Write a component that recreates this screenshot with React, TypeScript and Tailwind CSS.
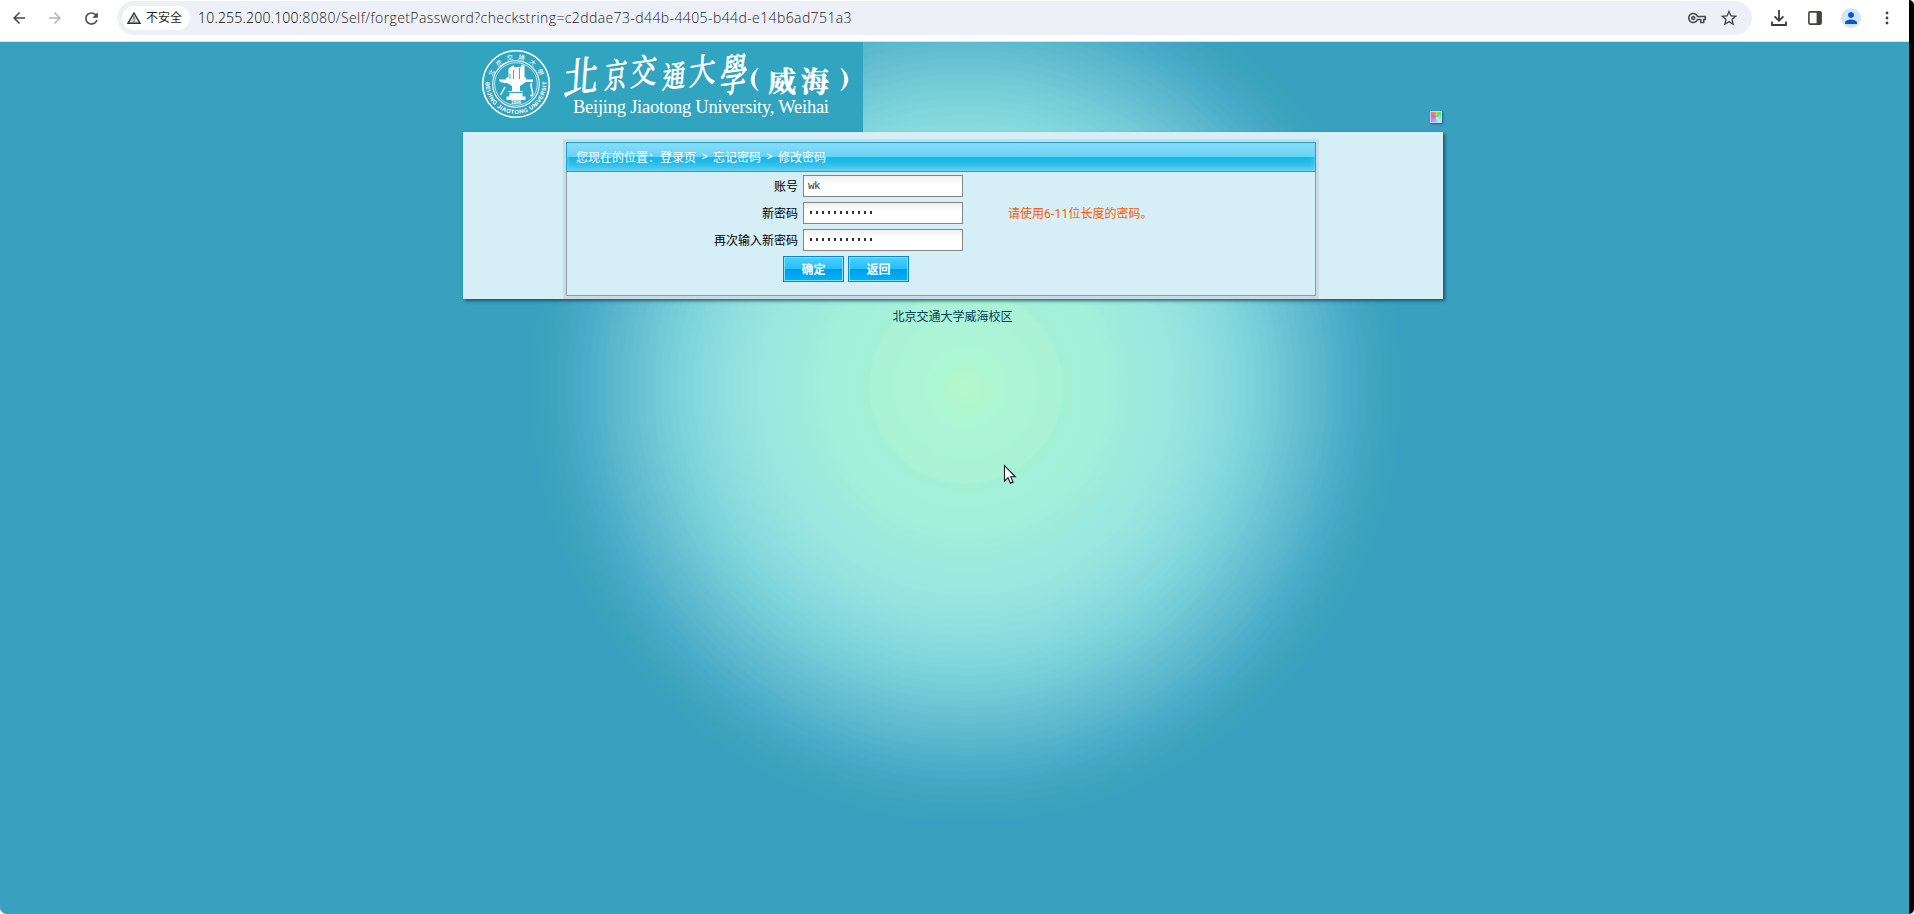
import React from "react";
import {
  MdArrowBack,
  MdArrowForward,
  MdRefresh,
  MdOutlineVpnKey,
  MdStarBorder,
  MdPerson,
} from "react-icons/md";

// Radius and colour of the backdrop glow, from the centre outwards.
const glowStops: [number, number, number, number][] = [
  [0, 184, 246, 204],
  [14, 176, 246, 206],
  [30, 171, 246, 208],
  [44, 171, 245, 214],
  [92, 170, 243, 214],
  [98, 164, 240, 215],
  [138, 163, 239, 217],
  [165, 158, 235, 221],
  [200, 154, 232, 222],
  [245, 142, 222, 223],
  [275, 130, 214, 219],
  [305, 114, 203, 214],
  [335, 99, 190, 208],
  [365, 84, 178, 203],
  [392, 70, 169, 197],
  [405, 66, 166, 192],
  [422, 58, 163, 188],
  [436, 58, 160, 191],
];

function glowAt(radius: number) {
  const next = Math.max(1, glowStops.findIndex((s) => s[0] >= radius));
  const a = glowStops[next - 1];
  const b = glowStops[next];
  const t = Math.min(1, Math.max(0, (radius - a[0]) / (b[0] - a[0])));
  const mix = (i: 1 | 2 | 3) => Math.round(a[i] + (b[i] - a[i]) * t);
  return `rgb(${mix(1)},${mix(2)},${mix(3)})`;
}

function glowGradient() {
  const parts: string[] = [];
  for (let r = 0; r < 432; r += 8) {
    const colour = glowAt(r + 4);
    parts.push(`${colour} ${r === 0 ? 0 : r + 2}px`, `${colour} ${r + 7}px`);
  }
  parts.push("#3aa0bf 436px");
  return `radial-gradient(circle 436px at 966px 345px, ${parts.join(",")})`;
}

function ToolButton({ children }: { children: React.ReactNode }) {
  return <button className="flex h-9 w-9 shrink-0 items-center justify-center text-[#474747]">{children}</button>;
}

function BrowserBar() {
  return (
    <header className="flex h-[42px] w-[1909px] shrink-0 items-start border-b border-[#dedfe1] bg-white pl-px">
      <ToolButton><MdArrowBack size={18} /></ToolButton>
      <button className="flex h-9 w-9 items-center justify-center text-[#b4b4b4]"><MdArrowForward size={18} /></button>
      <ToolButton><MdRefresh size={19} /></ToolButton>
      <div className="mt-px ml-2 flex h-[34px] w-[1635px] shrink-0 items-center rounded-full bg-[#edf1f7] pr-[13px] pl-[5px]">
        <div className="flex h-6 w-[68px] items-center rounded-full bg-white pl-[5px]">
          <svg width="14" height="12" viewBox="0 0 14 12">
            <path d="M7 1 13 11.2H1Z" fill="#d9d9d9" stroke="#333" strokeWidth="1.4" strokeLinejoin="miter" />
            <path d="M7 4.300v3.200M7 8.600v1.300" stroke="#555" strokeWidth="1.100" />
          </svg>
          <span className="ml-[5px] text-[12px] whitespace-nowrap text-[#1f1f1f]">不安全</span>
        </div>
        <div className="ml-2 flex-1 font-['Open_Sans','Noto_Sans',sans-serif] text-[14px] leading-5 font-light tracking-[0.400px] whitespace-nowrap text-[#222]">
          <span className="tracking-[0.200px] text-black">10.255.200.100:</span>8080/Self/forgetPassword?checkstring=c2ddae73-d44b-4405-b44d-e14b6ad751a3
        </div>
        <div className="flex items-center gap-[13px] text-[#474747]">
          <MdOutlineVpnKey size={18} />
          <MdStarBorder size={20} />
        </div>
      </div>
      <div className="ml-[9px] flex">
        <ToolButton>
          <svg width="16" height="16" viewBox="0 0 16 16" fill="none" stroke="#3c3c3c" strokeWidth="1.800">
            <path d="M8 0v10.500M3.600 6.400 8 10.800l4.400-4.400M1 11.500V15h14v-3.500" />
          </svg>
        </ToolButton>
        <ToolButton>
          <svg width="14" height="14" viewBox="0 0 14 14">
            <rect x="0.900" y="0.900" width="12.200" height="12.200" rx="1" fill="#fff" stroke="#43433f" strokeWidth="1.600" />
            <path d="M8.600 1H13v12H8.600Z" fill="#43433f" />
          </svg>
        </ToolButton>
        <ToolButton>
          <span className="flex h-5 w-5 items-center justify-center rounded-full bg-[#d3e3fd] text-[#0b57d0]"><MdPerson size={18} /></span>
        </ToolButton>
        <ToolButton>
          <svg width="4" height="14" viewBox="0 0 4 14" fill="#43433f">
            <circle cx="2" cy="2" r="1.400" /><circle cx="2" cy="7" r="1.400" /><circle cx="2" cy="12" r="1.400" />
          </svg>
        </ToolButton>
      </div>
    </header>
  );
}

function Logo() {
  return (
    <svg width="400" height="90" viewBox="0 0 400 90" className="block bg-[#31a4bf]">
      <defs>
        <path id="seal-top" d="M28.500 42a24.500 24.500 0 0 1 49 0" />
        <path id="seal-bottom" d="M22.800 38a30.400 30.400 0 1 0 60.400 0" />
      </defs>
      <g fill="none" stroke="#fff">
        <circle cx="53" cy="42" r="33.300" strokeWidth="1.600" />
        <circle cx="53" cy="42" r="23.300" strokeWidth="1.100" />
        <circle cx="53" cy="42" r="21.300" strokeWidth="0.700" />
      </g>
      <g fill="#fff">
        <path d="M45.500 26.500 51 23v2h7v-2h3.500v12l1.500 1v2H43v-2l2.500-1Z" />
        <path d="M36 37.500h8v-1h19v1h7V40h-7l-6 4v5h3v1H45.500v-1H49v-5l-5-3c-5 0-8-1-8-3.500Z" />
        <path d="M46.500 51h13v3.500h3V58h-19v-3.500h3Z" />
        <path d="M50.500 28v9M56.500 26v11M47 32v5" stroke="#31a4bf" strokeWidth="0.900" />
        <path d="M42 45 37.500 53M68.500 41c-2 4 2 7 1 12l-2 1" stroke="#fff" strokeWidth="1.500" fill="none" />
        <text x="53" y="62.300" fontSize="4.500" fontWeight="700" textAnchor="middle" fontFamily="Liberation Sans, sans-serif">1896</text>
        <text fontSize="6.500" fontFamily="'Noto Sans CJK TC', sans-serif" letterSpacing="4.500">
          <textPath href="#seal-top" startOffset="7">北京交通大學</textPath>
        </text>
        <text fontSize="5.800" fontWeight="700" fontFamily="Liberation Sans, sans-serif" textLength="103">
          <textPath href="#seal-bottom" startOffset="2" textLength="103">BEIJING JIAOTONG UNIVERSITY</textPath>
        </text>
      </g>
      <g fill="#fff" stroke="#fff" strokeWidth="0.700" strokeLinejoin="round" fontFamily="'Noto Serif CJK TC', 'Noto Sans CJK TC', sans-serif" textAnchor="middle">
        <text fontSize="37" transform="translate(117 50) rotate(-8) skewX(-12) scale(0.95 1.120)">北</text>
        <text fontSize="26" transform="translate(152 46) rotate(-8) skewX(-12) scale(0.85 1.300)">京</text>
        <text fontSize="29" transform="translate(180 42) rotate(-8) skewX(-12) scale(0.9 1.180)">交</text>
        <text fontSize="26" transform="translate(210 45) rotate(-8) skewX(-12) scale(0.9 1.120)">通</text>
        <text fontSize="29" transform="translate(239 41) rotate(-10) skewX(-12) scale(0.92 1.150)">大</text>
        <text fontSize="30" transform="translate(269 49) rotate(-8) skewX(-14) scale(0.9 1.450)">學</text>
      </g>
      <g fill="#fff" stroke="#fff" strokeWidth="0.500" fontFamily="'Noto Serif CJK SC', 'Noto Sans CJK SC', sans-serif" fontWeight="700" textAnchor="middle">
        <text x="319" y="50" fontSize="28">威</text>
        <text x="352" y="50" fontSize="28">海</text>
      </g>
      <path d="M295 26c-9 7-9 16 0 23c-5-7-5-16 0-23ZM378 26c9 7 9 16 0 23c5-7 5-16 0-23Z" fill="#fff" stroke="#fff" strokeWidth="0.900" />
      <text x="110" y="71" fontSize="18.500" fill="#fff" fontFamily="Liberation Serif, serif" textLength="256">Beijing Jiaotong University, Weihai</text>
    </svg>
  );
}

function Field({ label, hint, children }: { label: string; hint?: React.ReactNode; children: React.ReactNode }) {
  return (
    <div className="flex h-[22px] items-center">
      <label className="w-[231px] pt-0.5 text-right text-black">{label}</label>
      <div className="ml-[5px] flex h-[22px] w-[160px] items-center border border-[#858585] bg-linear-to-b from-[#eff0ee] to-white to-45% pl-1">{children}</div>
      {hint && <span className="ml-[45px] pt-0.5 whitespace-nowrap text-[#ff5a00]">{hint}</span>}
    </div>
  );
}

function Dots() {
  return (
    <span className="ml-0.5 flex gap-1 pb-0.5">
      {Array.from({ length: 11 }, (_, i) => <i key={i} className="block h-[3px] w-[2px] bg-[#333]" />)}
    </span>
  );
}

function GlossButton({ children }: { children: string }) {
  return (
    <button className="flex h-[26px] w-[61px] items-center justify-center border border-[#0a87c9] bg-[linear-gradient(#52cffe_0%,#1fc0fb_50%,#009ceb_52%,#00b4f4_100%)] pt-0.5 text-[12px] font-bold text-white shadow-[inset_0_0_0_1px_#7fe1fd]">
      {children}
    </button>
  );
}

function FormPanel() {
  return (
    <section className="h-[167px] w-[980px] bg-[#d6eef6] pt-[7px] pl-[100px] shadow-[2px_2px_3px_rgba(20,60,80,0.75)]">
      <div className="h-[160px] w-[756px] bg-[#c9dce6] p-[3px]">
        <div className="h-[154px] w-[750px] border border-[#8c9ca6] bg-[#d6eef6]">
          <nav className="-mx-px -mt-px flex h-[30px] items-center rounded-t-[1px] border border-[#16a5d3] bg-[linear-gradient(#8bdcf8_0%,#66d2f3_48%,#17b5e6_52%,#25bbe8_70%,#5accf0_100%)] pt-px pl-[9px] leading-none text-white shadow-[inset_0_0_4px_#7fdcf6]">
            <span>您现在的位置：</span>
            <a>登录页</a>
            <span className="w-[17px] text-center font-['Liberation_Mono',monospace] text-[10px]">&gt;</span>
            <a>忘记密码</a>
            <span className="w-[17px] text-center font-['Liberation_Mono',monospace] text-[10px]">&gt;</span>
            <a>修改密码</a>
          </nav>
          <form className="flex flex-col gap-[5px] pt-[3px]">
            <Field label="账号"><span className="font-['Liberation_Mono',monospace] text-[11px] tracking-[-0.600px] text-[#333]">wk</span></Field>
            <Field label="新密码" hint={<>请使用<span className="font-[Roboto,sans-serif] text-[12px] tracking-[0.200px]">6-11</span>位长度的密码。</>}><Dots /></Field>
            <Field label="再次输入新密码"><Dots /></Field>
            <div className="flex gap-1 pl-[216px]">
              <GlossButton>确定</GlossButton>
              <GlossButton>返回</GlossButton>
            </div>
          </form>
        </div>
      </div>
    </section>
  );
}

export default function App() {
  return (
    <div className="flex h-[914px] w-[1914px] overflow-hidden bg-white font-['Liberation_Sans','Noto_Sans_CJK_SC',sans-serif] text-[12px]">
      <div className="relative flex w-[1909px] shrink-0 flex-col overflow-hidden rounded-bl-[7px]">
        <BrowserBar />
        <main className="flex-1 bg-[#3aa0bf] pl-[463px]" style={{ backgroundImage: glowGradient() }}>
          <div className="flex w-[980px] flex-col">
            <div className="flex items-end justify-between">
              <Logo />
              <span className="mr-px mb-[9px] h-[12px] w-[12px] border border-[#c9d4ff] bg-[conic-gradient(#f8c070,#58e070_40deg,#7cf0b0_90deg,#b8f4fa_140deg,#9cb8ff_190deg,#c080f0_240deg,#e86098_290deg,#f8a030)] shadow-[1px_1px_2px_rgba(20,60,130,0.7)]" />
            </div>
            <FormPanel />
            <footer className="mt-[9px] text-center leading-[18px] text-[#053e5c]">
              <span className="mr-px">北京交通大学威海校区</span>
            </footer>
          </div>
        </main>
        <svg className="absolute top-[464px] left-[1003px]" width="14" height="21" viewBox="0 0 14 21">
          <path d="M1.500 1.500v15.500l3.500-3.300 2.400 5.600 2.700-1.200-2.400-5.300h4.600Z" fill="#fff" stroke="#1c1c2c" strokeWidth="1.100" />
        </svg>
      </div>
      <div className="w-[5px] rounded-tr-[5px] rounded-br-[5px] bg-black" />
    </div>
  );
}
